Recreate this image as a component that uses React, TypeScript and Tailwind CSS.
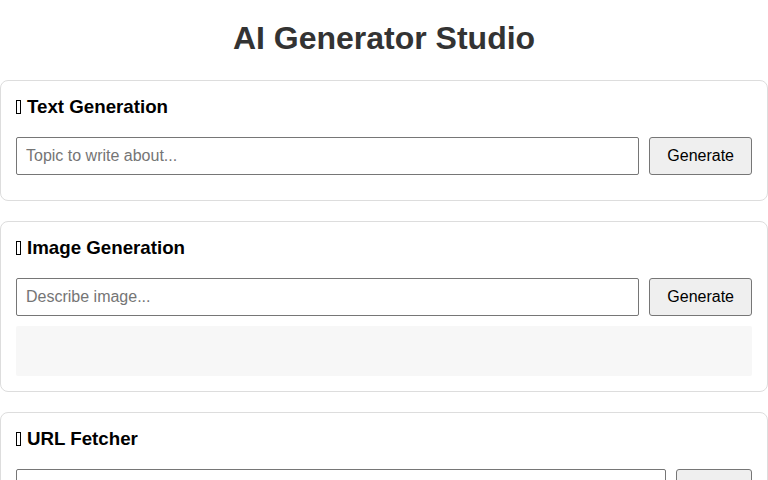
import React from 'react';

const font = { fontFamily: '"Liberation Sans", Arial, sans-serif' };

// missing-glyph box, as the emoji shows without an emoji font
const Tofu = () => (
  <span className="inline-block w-[5px] h-[14px] border border-black align-[-1px] mr-[6px]" />
);

const Row: React.FC<{ placeholder: string; label: string }> = ({ placeholder, label }) => (
  <div className="flex gap-[10px] mb-[10px]">
    <input
      type="text"
      placeholder={placeholder}
      className="flex-1 min-w-0 h-[38px] px-[9px] text-[16px] text-black border border-[#767676] rounded-[2px] bg-white placeholder:text-[#757575] outline-none"
    />
    <button className="h-[38px] px-[17px] text-[16px] text-black bg-[#efefef] border border-[#767676] rounded-[3px]">
      {label}
    </button>
  </div>
);

const Card: React.FC<{ title: string; children: React.ReactNode }> = ({ title, children }) => (
  <section className="border border-[#dddddd] rounded-[8px] p-[15px] mb-[20px] bg-white">
    <h3 className="text-[18.72px] leading-[22px] font-bold text-black mb-[19px]">
      <Tofu />
      {title}
    </h3>
    {children}
  </section>
);

export default function App() {
  return (
    <div className="min-h-screen bg-white" style={font}>
      <h1 className="pt-[20px] mb-[23px] text-[32px] leading-[37px] font-bold text-center text-[#333333]">
        AI Generator Studio
      </h1>
      <Card title="Text Generation">
        <Row placeholder="Topic to write about..." label="Generate" />
      </Card>
      <Card title="Image Generation">
        <Row placeholder="Describe image..." label="Generate" />
        <div className="h-[50px] bg-[#f7f7f7] rounded-[2px]" />
      </Card>
      <Card title="URL Fetcher">
        <Row placeholder="" label="Fetch" />
        <div className="h-[50px] bg-[#f7f7f7]" />
      </Card>
    </div>
  );
}
